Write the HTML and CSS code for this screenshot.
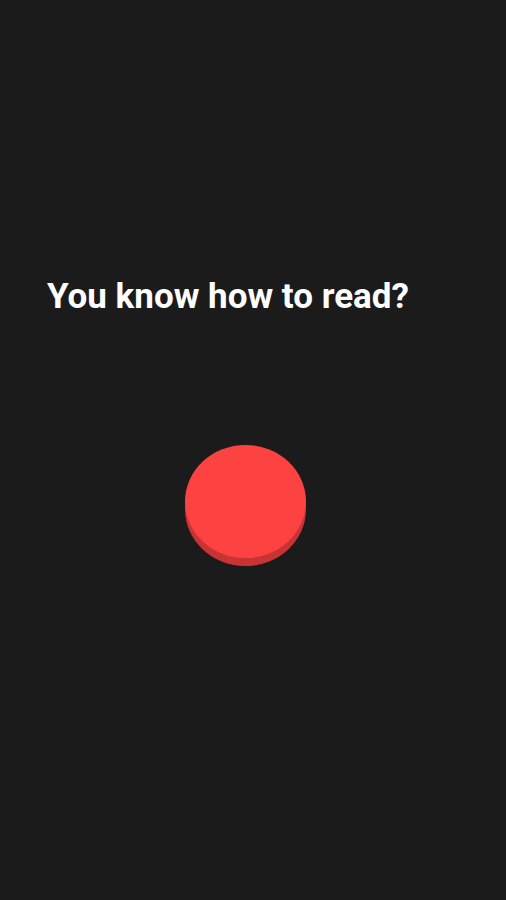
FILE: index.html
```html
<!DOCTYPE html>
<html>
<head>
<meta charset="utf-8">
<link rel="stylesheet" href="styles.css">
</head>
<body>
<main class="screen">
  <h1 class="question">You know how to read?</h1>
  <div class="button-wrap">
    <button class="red-button" aria-label="button"></button>
  </div>
</main>
</body>
</html>
```
FILE: styles.css
```css
html, body {
  margin: 0;
  padding: 0;
  background: #1b1b1b;
}
.screen {
  width: 506px;
  height: 900px;
  display: flex;
  flex-direction: column;
  padding-top: 277px;
  box-sizing: border-box;
}
.question {
  margin: 0 0 0 47px;
  font-family: Roboto, "Liberation Sans", sans-serif;
  font-weight: 700;
  font-size: 35px;
  line-height: 40px;
  color: #ffffff;
  white-space: nowrap;
}
.button-wrap {
  padding-top: 128px;
  padding-left: 185px;
}
.red-button {
  display: block;
  width: 121px;
  height: 113px;
  padding: 0;
  border: none;
  border-radius: 50%;
  background: #fd4242;
  box-shadow: 0 8px 0 #c83434;
}
```
